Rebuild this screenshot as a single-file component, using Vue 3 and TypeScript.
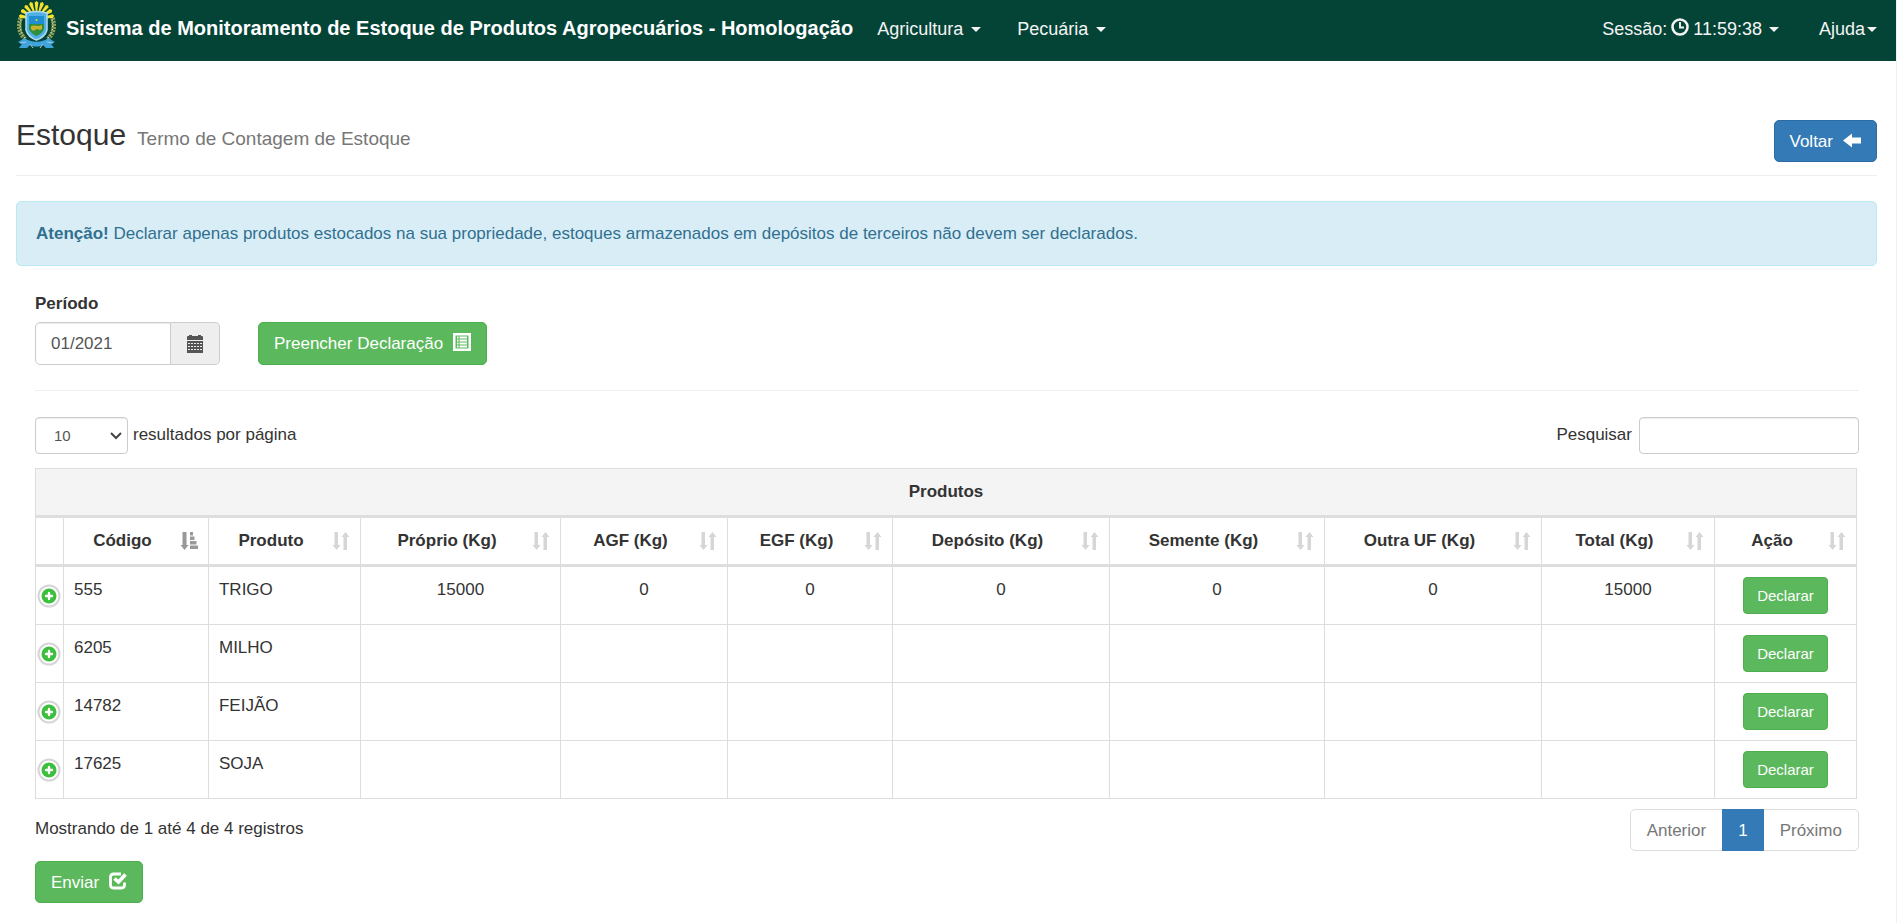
<script setup lang="ts">
import { ref } from 'vue'

interface Column {
  label: string
  width: number
  sorted?: boolean
}

interface Product {
  code: string
  name: string
  values: string[]
}

const columns: Column[] = [
  { label: 'Código', width: 145, sorted: true },
  { label: 'Produto', width: 152 },
  { label: 'Próprio (Kg)', width: 200 },
  { label: 'AGF (Kg)', width: 167 },
  { label: 'EGF (Kg)', width: 165 },
  { label: 'Depósito (Kg)', width: 217 },
  { label: 'Semente (Kg)', width: 215 },
  { label: 'Outra UF (Kg)', width: 217 },
  { label: 'Total (Kg)', width: 173 },
  { label: 'Ação', width: 142 },
]

const totalWidth = columns.reduce((sum, c) => sum + c.width, 28)
const share = (w: number) => ({ width: `${(w / totalWidth) * 100}%` })

const blank = ['', '', '', '', '', '', '']
const products: Product[] = [
  { code: '555', name: 'TRIGO', values: ['15000', '0', '0', '0', '0', '0', '15000'] },
  { code: '6205', name: 'MILHO', values: blank },
  { code: '14782', name: 'FEIJÃO', values: blank },
  { code: '17625', name: 'SOJA', values: blank },
]

const rays = [-80, -60, -40, -20, 0, 20, 40, 60, 80]

const period = ref('01/2021')
const pageSize = ref('10')
const search = ref('')
</script>

<template>
  <div class="page">
    <nav class="navbar">
      <a class="brand" href="#">
        <svg class="crest" viewBox="0 0 39 48" aria-hidden="true">
          <g fill="#f3e32b">
            <path v-for="a in rays" :key="a" d="M18.7 11 L17.6 2.500 L19.500 1 L21.400 2.500 L20.300 11 Z" :transform="`rotate(${a} 19.5 19)`" />
          </g>
          <path d="M3.500 18 C1 26 2 33 8 39 M35.500 18 C38 26 37 33 31 39" fill="none" stroke="#8f9f55" stroke-width="4.500" stroke-dasharray="2 1" />
          <path d="M4 20 C2 28 4 34 9 39 M35 20 C37 28 35 34 30 39" fill="none" stroke="#dcd79a" stroke-width="1.500" stroke-dasharray="1 2" />
          <path d="M1 42 L8 38 C13 43 26 43 31 38 L38 42 L34 44 L37 48 H29 L26 45 C22 47 17 47 13 45 L10 48 H2 L5 44 Z" fill="#3fa3dc" />
          <path d="M13 44 L16 48 M26 44 L23 48 M3 43 L9 42 M36 43 L30 42" stroke="#a9cfe0" stroke-width="1" />
          <path d="M9 13 Q19.500 10 30 13 V30 Q28 37 19.500 40 Q11 37 9 30 Z" fill="#4fb0e8" stroke="#b4dcf0" stroke-width="1.500" />
          <path d="M12 16 H27 V24 H12 Z" fill="#1f8fd0" />
          <path d="M12 24 H27 V29 Q25 34 19.500 36 Q14 34 12 29 Z" fill="#2f8f3a" />
          <path d="M14 26 L17 25.500 L22 26 L25 25 V29 L23 30 L20 29 L16 31 L14 29 Z" fill="#c9b02e" />
          <circle cx="19.500" cy="20" r="1" fill="#e8d94a" />
        </svg>
        <span>Sistema de Monitoramento de Estoque de Produtos Agropecuários - Homologação</span>
      </a>
      <a class="nav-link" href="#">Agricultura <span class="caret"></span></a>
      <a class="nav-link" href="#">Pecuária <span class="caret"></span></a>
      <div class="nav-right">
        <a class="nav-link session" href="#">
          <span>Sessão:</span>
          <svg width="18" height="18" viewBox="0 0 18 18" aria-hidden="true">
            <circle cx="9" cy="9" r="7.500" fill="none" stroke="currentColor" stroke-width="2.600" />
            <path d="M9 4 V9.500 H13" fill="none" stroke="currentColor" stroke-width="1.900" />
          </svg>
          <span>11:59:38</span>
          <span class="caret"></span>
        </a>
        <a class="nav-link help" href="#">Ajuda<span class="caret"></span></a>
      </div>
    </nav>

    <main class="content">
      <header class="page-head">
        <h1>Estoque <small>Termo de Contagem de Estoque</small></h1>
        <button class="btn primary" type="button">
          Voltar
          <svg width="18" height="18" viewBox="0 0 18 18" aria-hidden="true">
            <path d="M0 9.500 L9 2.500 V6.500 H18 V12.500 H9 V16.500 Z" fill="currentColor" />
          </svg>
        </button>
      </header>

      <div class="alert" role="alert">
        <strong>Atenção!</strong> Declarar apenas produtos estocados na sua propriedade, estoques armazenados em
        depósitos de terceiros não devem ser declarados.
      </div>

      <div class="panel">
        <form class="period" @submit.prevent>
          <div>
            <label for="period">Período</label>
            <div class="input-group">
              <input id="period" v-model="period" type="text" />
              <button class="addon" type="button" aria-label="Calendário">
                <svg width="18" height="20" viewBox="0 0 18 20" aria-hidden="true">
                  <path d="M1 3 Q1 2 2 2 H3 V1 H6 V2 H12 V1 H15 V2 H16 Q17 2 17 3 V6 H1 Z M1 7 H17 V19 H1 Z" fill="#555" />
                  <path d="M2 9.500 H16 M2 12.500 H16 M2 15.500 H16" stroke="#eee" stroke-width="1" stroke-dasharray="2 1" />
                </svg>
              </button>
            </div>
          </div>
          <button class="btn success" type="button">
            Preencher Declaração
            <svg width="18" height="18" viewBox="0 0 18 18" aria-hidden="true">
              <path d="M0 0 H18 V18 H0 Z M2.500 2.500 V15.500 H15.500 V2.500 Z" fill="currentColor" fill-rule="evenodd" />
              <path d="M4 4.500 H5.500 M4 7.500 H5.500 M4 10.500 H5.500 M4 13.500 H5.500 M6.500 4.500 H14 M6.500 7.500 H14 M6.500 10.500 H14 M6.500 13.500 H14" stroke="currentColor" stroke-width="1.900" />
            </svg>
          </button>
        </form>

        <div class="toolbar">
          <div class="length">
            <span class="select-box">
              <select id="page-size" v-model="pageSize">
                <option>10</option>
                <option>25</option>
                <option>50</option>
              </select>
              <svg width="12" height="8" viewBox="0 0 12 8" aria-hidden="true">
                <path d="M1 1 L6 6 L11 1" fill="none" stroke="#444" stroke-width="2" />
              </svg>
            </span>
            <label for="page-size">resultados por página</label>
          </div>
          <div class="filter">
            <label for="search">Pesquisar</label>
            <input id="search" v-model="search" type="search" />
          </div>
        </div>

        <table>
          <colgroup>
            <col :style="share(28)" />
            <col v-for="c in columns" :key="c.label" :style="share(c.width)" />
          </colgroup>
          <thead>
            <tr class="group">
              <th :colspan="columns.length + 1">Produtos</th>
            </tr>
            <tr>
              <th></th>
              <th v-for="c in columns" :key="c.label">
                <div class="head-cell">
                  <span>{{ c.label }}</span>
                  <svg width="18" height="18" viewBox="0 0 18 18" :class="{ active: c.sorted }" aria-hidden="true">
                    <path v-if="c.sorted" d="M2.500 0 H6.500 V13 H8.500 L4.500 18 L0.500 13 H2.500 Z M10 0 H13 V3.500 H10 Z M10 4.500 H14.500 V8 H10 Z M10 9 H16.500 V12.500 H10 Z M10 13.500 H18 V17 H10 Z" fill="currentColor" />
                    <path v-else d="M2.500 0 H6 V13 H8.500 L4.500 18 L0.500 13 H2.500 Z M11.500 18 V5 H9.500 L13.500 0 L17.500 5 H15 V18 Z" fill="currentColor" />
                  </svg>
                </div>
              </th>
            </tr>
          </thead>
          <tbody>
            <tr v-for="p in products" :key="p.code">
              <td class="expand">
                <button type="button" :aria-label="`Expandir ${p.name}`">
                  <svg width="24" height="24" viewBox="0 0 24 24" aria-hidden="true">
                    <circle cx="12" cy="12" r="10.500" fill="#fff" stroke="#d6d6d6" stroke-width="2" />
                    <circle cx="12" cy="12" r="7.500" fill="#3cbf3c" />
                    <path d="M12 9 V15 M9 12 H15" stroke="#fff" stroke-width="2.400" stroke-linecap="round" />
                  </svg>
                </button>
              </td>
              <td>{{ p.code }}</td>
              <td>{{ p.name }}</td>
              <td v-for="(v, i) in p.values" :key="i" class="num">{{ v }}</td>
              <td class="num"><button class="btn success small" type="button">Declarar</button></td>
            </tr>
          </tbody>
        </table>

        <div class="table-foot">
          <p>Mostrando de 1 até 4 de 4 registros</p>
          <nav class="pagination" aria-label="Paginação">
            <a href="#">Anterior</a>
            <a class="current" href="#">1</a>
            <a href="#">Próximo</a>
          </nav>
        </div>

        <button class="btn success" type="button">
          Enviar
          <svg width="18" height="18" viewBox="0 0 18 18" aria-hidden="true">
            <path d="M12 2 H4.500 Q1.500 2 1.500 5 V13 Q1.500 16 4.500 16 H12.500 Q15.500 16 15.500 13 V10.500" fill="none" stroke="currentColor" stroke-width="2.800" />
            <path d="M5.500 6.500 L9.500 10 L16.500 2.500" fill="none" stroke="currentColor" stroke-width="3.600" />
          </svg>
        </button>
      </div>
    </main>
  </div>
</template>

<style>
body {
  margin: 0;
}
</style>

<style scoped>
* {
  box-sizing: border-box;
}

.page {
  min-height: 100vh;
  border-right: 1px solid #f0f0f0;
  background: #fff;
  color: #333;
  font: 17px/25px "Liberation Sans", Arial, sans-serif;
}

button,
input,
select {
  margin: 0;
  font: inherit;
}

.navbar {
  display: flex;
  align-items: flex-start;
  height: 61px;
  padding: 0 19px 0 17px;
  background: #044437;
  white-space: nowrap;
}

.brand {
  display: flex;
  gap: 10px;
  margin-right: 6px;
  color: #fff;
  font-size: 20px;
  font-weight: bold;
  text-decoration: none;
}

.brand span {
  padding-top: 16px;
}

.crest {
  width: 39px;
  height: 48px;
}

.nav-link {
  display: flex;
  align-items: center;
  gap: 8px;
  padding: 17px 18px;
  color: #f4f4f4;
  font-size: 18px;
  text-decoration: none;
}

.caret {
  border: 5px solid transparent;
  border-top-color: currentColor;
  border-bottom: 0;
}

.nav-right {
  display: flex;
  margin-left: auto;
}

.session {
  gap: 4px;
}

.session svg {
  margin-bottom: 5px;
}

.session .caret {
  margin-left: 3px;
}

.help {
  gap: 2px;
  padding-right: 0;
  padding-left: 22px;
}

.content {
  padding: 59px 19px 20px 16px;
}

.page-head {
  display: flex;
  justify-content: space-between;
  align-items: flex-start;
  padding-bottom: 13px;
  border-bottom: 1px solid #eee;
}

h1 {
  display: flex;
  align-items: baseline;
  gap: 11px;
  margin: 0;
  font-size: 30px;
  font-weight: normal;
  line-height: 30px;
}

h1 small {
  color: #777;
  font-size: 19px;
}

.btn {
  display: inline-flex;
  align-items: center;
  justify-content: center;
  gap: 10px;
  height: 42px;
  padding: 0 15px;
  border: 1px solid;
  border-radius: 5px;
  color: #fff;
}

.btn svg {
  margin-bottom: 3px;
}

.primary {
  border-color: #2e6da4;
  background: #337ab7;
}

.success {
  border-color: #4cae4c;
  background: #5cb85c;
}

.small {
  height: 37px;
  padding: 0 13px;
  border-radius: 4px;
  font-size: 15px;
}

.alert {
  margin-top: 25px;
  padding: 19px;
  border: 1px solid #bce8f1;
  border-radius: 5px;
  background: #d9edf7;
  color: #31708f;
}

.panel {
  padding: 25px 18px 0 19px;
}

.period {
  display: flex;
  align-items: flex-end;
  gap: 38px;
  padding-bottom: 25px;
  border-bottom: 1px solid #eee;
}

.period label {
  display: block;
  margin-bottom: 6px;
  font-weight: bold;
}

.period .btn {
  height: 43px;
}

.input-group {
  display: flex;
  width: 185px;
  height: 43px;
}

input,
select {
  border: 1px solid #ccc;
  background: #fff;
  color: #555;
  box-shadow: inset 0 1px 1px rgba(0, 0, 0, 0.075);
}

.input-group input {
  flex: 1;
  min-width: 0;
  padding: 0 15px;
  border-radius: 5px 0 0 5px;
}

.addon {
  display: flex;
  align-items: center;
  justify-content: center;
  width: 49px;
  padding: 0;
  border: 1px solid #ccc;
  border-left: 0;
  border-radius: 0 5px 5px 0;
  background: #eee;
}

.toolbar {
  display: flex;
  justify-content: space-between;
  margin: 26px 0 14px;
}

.length,
.filter {
  display: flex;
  align-items: flex-start;
  gap: 5px;
}

.filter {
  gap: 7px;
}

.toolbar label {
  padding-top: 5px;
}

.select-box {
  position: relative;
}

.select-box select {
  display: block;
  width: 93px;
  height: 37px;
  padding: 0 18px;
  border-radius: 4px;
  appearance: none;
  font-size: 15px;
}

.select-box svg {
  position: absolute;
  top: 15px;
  right: 6px;
  pointer-events: none;
}

.filter input {
  width: 220px;
  height: 37px;
  padding: 0 12px;
  border-radius: 4px;
  font-size: 15px;
}

table {
  width: calc(100% - 2px);
  border-top: 1px solid #ddd;
  border-left: 1px solid #ddd;
  border-spacing: 0;
  table-layout: fixed;
}

th,
td {
  border-right: 1px solid #ddd;
  border-bottom: 1px solid #ddd;
  vertical-align: top;
}

th {
  padding: 10px 10px 11px;
  border-bottom-width: 3px;
  white-space: nowrap;
}

.group th {
  background: #f4f4f4;
}

.head-cell {
  display: flex;
  align-items: center;
}

.head-cell span {
  flex: 1;
  margin-right: 9px;
}

.head-cell svg {
  color: #d6d6d6;
}

.head-cell svg.active {
  color: #999;
}

td {
  height: 58px;
  padding: 10px 10px 0;
}

.num {
  text-align: center;
}

.expand {
  padding: 0;
  text-align: center;
  vertical-align: middle;
}

.expand button {
  display: block;
  margin: 0 auto;
  padding: 0;
  border: 0;
  background: none;
}

.expand svg {
  display: block;
}

.table-foot {
  display: flex;
  justify-content: space-between;
  align-items: flex-start;
  margin: 10px 0;
}

.table-foot p {
  margin: 7px 0 0;
}

.pagination {
  display: flex;
  border: 1px solid #ddd;
  border-radius: 5px;
}

.pagination a {
  padding: 8px 16px 7px;
  color: #777;
  text-decoration: none;
}

.pagination .current {
  margin: -1px 0;
  padding: 9px 16px 8px;
  background: #337ab7;
  color: #fff;
}
</style>
